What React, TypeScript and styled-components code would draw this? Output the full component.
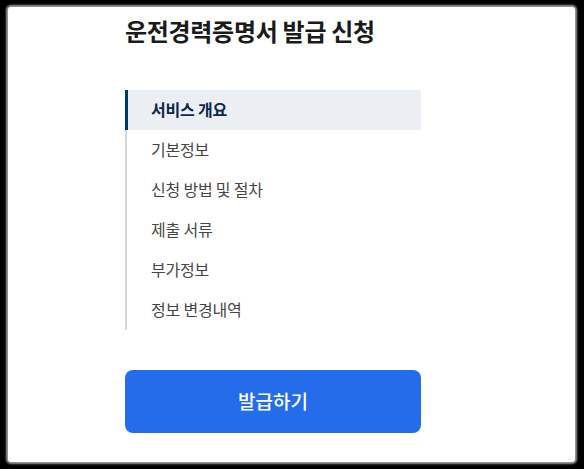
import React from 'react';
import styled, { createGlobalStyle } from 'styled-components';

const GlobalStyle = createGlobalStyle`
  html, body {
    margin: 0;
    padding: 0;
    background: #000;
  }
  body {
    font-family: "Noto Sans CJK KR", "Noto Sans", sans-serif;
  }
`;

const Frame = styled.div`
  height: 469px;
  box-sizing: border-box;
  padding: 7px 9px 7px 8px;
`;

const Sheet = styled.div`
  height: 100%;
  background: #fff;
  border-radius: 3px;
  box-shadow: 0 0 2px 2px #9a9a9a;
  box-sizing: border-box;
  padding: 6px 0 0 117px;
`;

const Column = styled.div`
  width: 296px;
`;

const Title = styled.h1`
  margin: 0;
  font-size: 24px;
  line-height: 36px;
  font-weight: 700;
  color: #1b1b1b;
  letter-spacing: -0.3px;
`;

const Menu = styled.ul`
  list-style: none;
  margin: 41px 0 0;
  padding: 0;
`;

const Item = styled.li<{ $active?: boolean }>`
  height: 40px;
  box-sizing: border-box;
  display: flex;
  align-items: center;
  padding-bottom: 3px;
  padding-left: ${p => (p.$active ? '23px' : '24px')};
  border-left: ${p => (p.$active ? '3px solid #003675' : '2px solid #cfd8e3')};
  background: ${p => (p.$active ? '#ebeff4' : 'transparent')};
  font-size: 16px;
  font-weight: ${p => (p.$active ? 700 : 400)};
  color: ${p => (p.$active ? '#0b2750' : '#464646')};
  letter-spacing: -0.2px;
`;

const IssueButton = styled.button`
  margin-top: 40px;
  width: 296px;
  height: 63px;
  padding-bottom: 3px;
  border: none;
  border-radius: 8px;
  background: #256ceb;
  color: #fff;
  font-family: inherit;
  font-size: 19px;
  font-weight: 500;
  cursor: pointer;
`;

const items = ['서비스 개요', '기본정보', '신청 방법 및 절차', '제출 서류', '부가정보', '정보 변경내역'];

export default function App() {
  return (
    <>
      <GlobalStyle />
      <Frame>
        <Sheet>
          <Column>
            <Title>운전경력증명서 발급 신청</Title>
            <Menu>
              {items.map((label, i) => (
                <Item key={label} $active={i === 0}>
                  {label}
                </Item>
              ))}
            </Menu>
            <IssueButton>발급하기</IssueButton>
          </Column>
        </Sheet>
      </Frame>
    </>
  );
}
